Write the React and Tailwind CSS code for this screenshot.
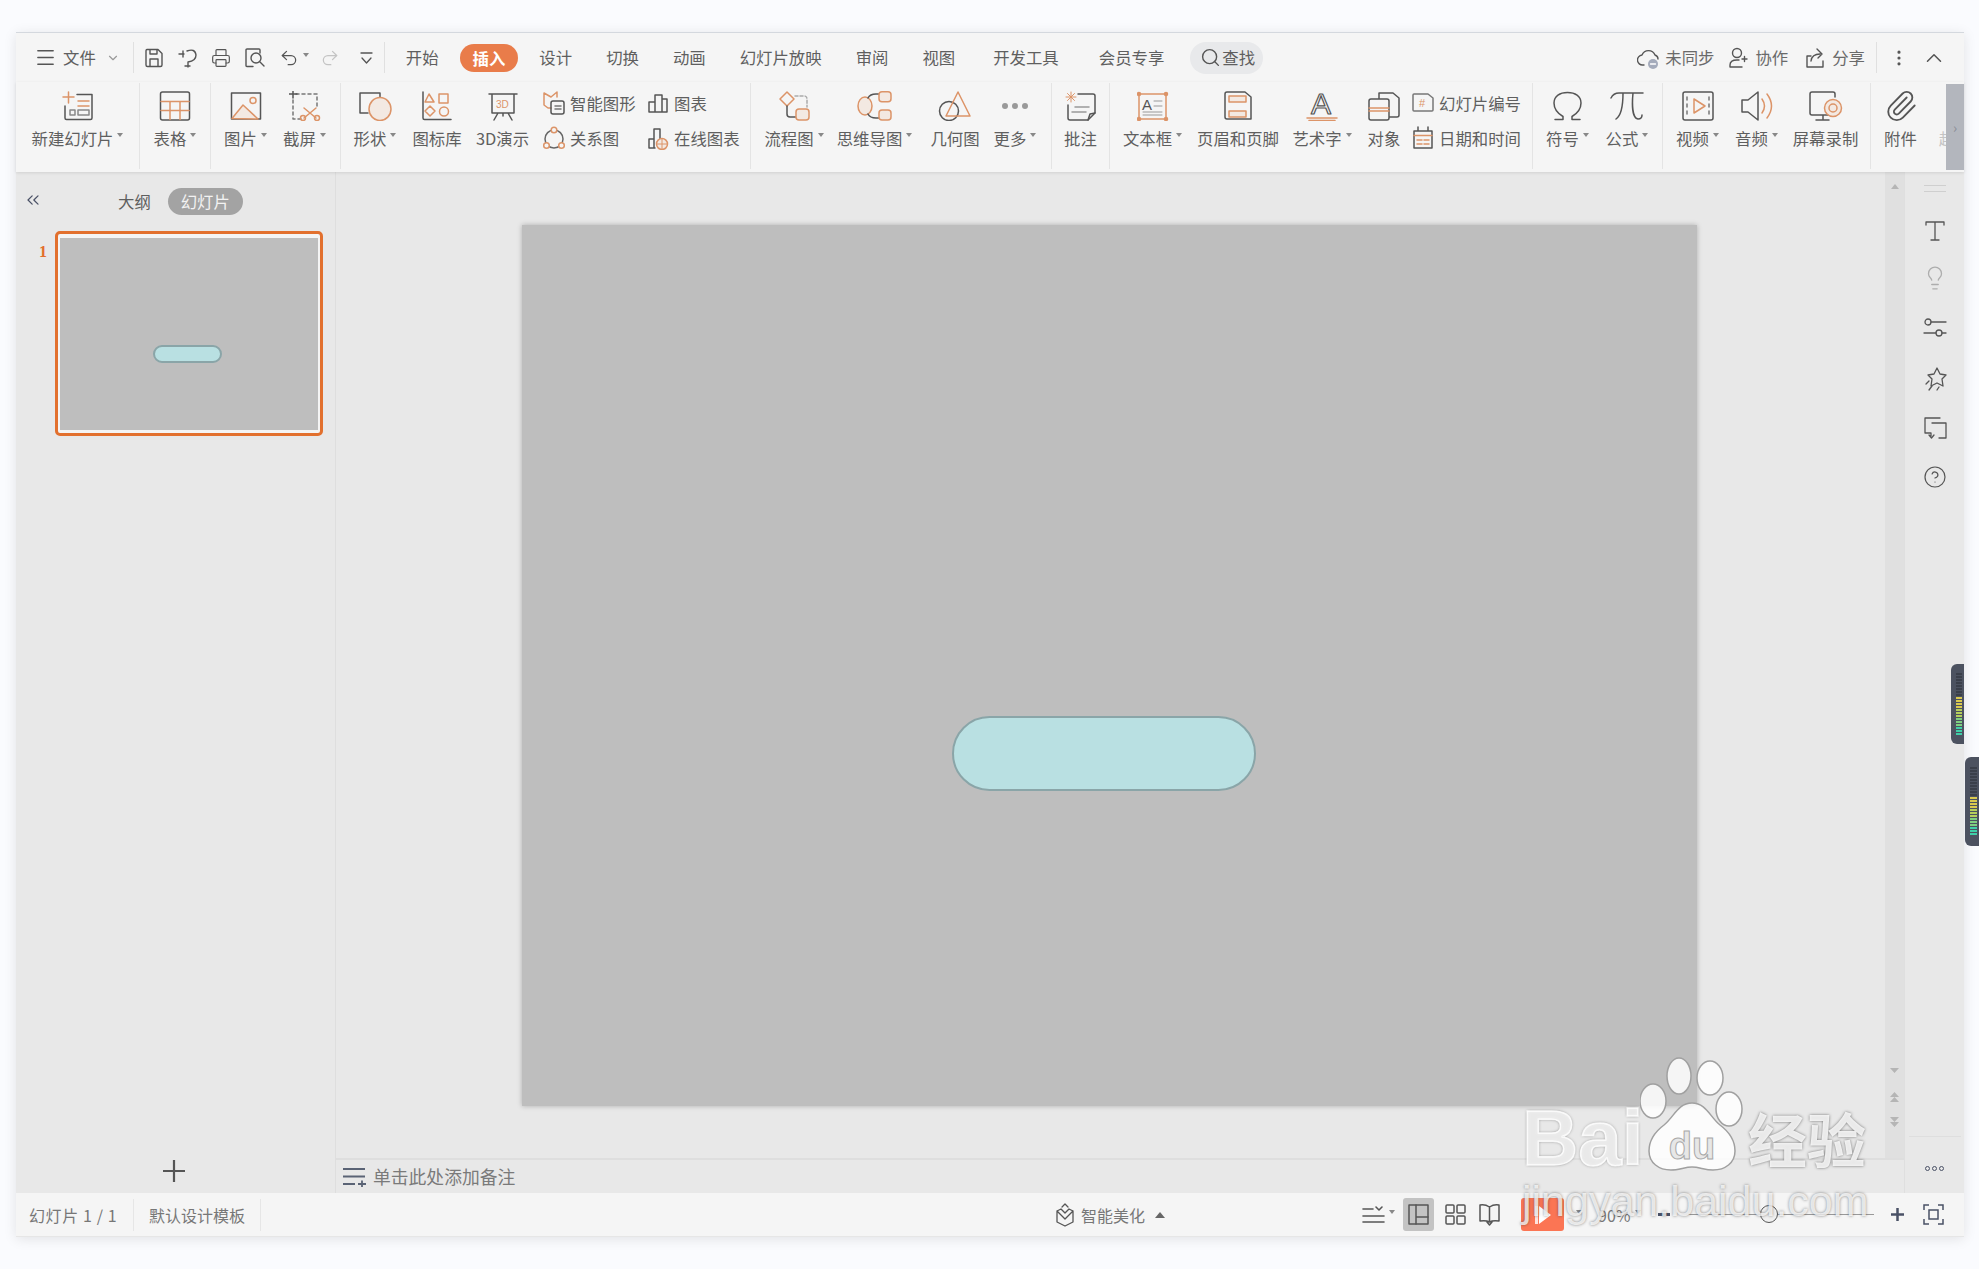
import { ChevronDown, ChevronsLeft, ChevronUp, CircleHelp, EllipsisVertical, Lightbulb, Menu, Paperclip, Printer, Redo2, Search, Undo2 } from "lucide-react";

const G = "#555";
const O = "#dc9468";
const F = "#f3e9e2";

function Svg({ w = 32, h = 30, sw = 1.5, children }) {
  return (
    <svg width={w} height={h} viewBox={`0 0 ${w} ${h}`} fill="none" stroke={G} strokeWidth={sw} strokeLinecap="round" strokeLinejoin="round">
      {children}
    </svg>
  );
}

function Caret() {
  return <span className="inline-block ml-[4px] mb-[6px] border-x-[3px] border-t-[4px] border-x-transparent border-t-[#888]" />;
}

function Big({ className, label, caret, children, muted }) {
  return (
    <div className={`${className} shrink-0 flex flex-col items-center pt-[9px]`}>
      <div className="h-[29px] flex items-center justify-center">{children}</div>
      <div className={`mt-[6px] h-[24px] leading-[24px] flex items-center whitespace-nowrap ${muted ? "text-[#c4c4c4]" : ""}`}>
        {label}
        {caret && <Caret />}
      </div>
    </div>
  );
}

function Small({ icon, label }) {
  return (
    <div className="flex items-center h-[24px] gap-[5px] whitespace-nowrap">
      <div className="w-[22px] flex justify-center">{icon}</div>
      {label}
    </div>
  );
}

function Sep() {
  return <div className="w-px h-[86px] mt-[1px] bg-[#e4e4e4] shrink-0" />;
}

const meterColors = ["#3a3f4a", "#d9c94f", "#b5cf5c", "#7fcf80", "#3fcfa8"];

function Meter({ bars, dark, w, h }) {
  return (
    <svg width={w} height={h} viewBox={`0 0 ${w} ${h}`}>
      {Array.from({ length: bars }).map((_, i) => {
        let color = meterColors[0];
        if (i >= dark) {
          const t = (i - dark) / (bars - dark);
          color = meterColors[1 + Math.min(3, Math.floor(t * 4))];
        }
        return <rect key={i} x="0" y={i * 3} width={w} height="2" fill={color} />;
      })}
    </svg>
  );
}

/* ribbon icons */
const NewSlide = () => (
  <Svg>
    <path d="M1 6h11M6.500 1v11" stroke={O} />
    <path d="M3 15v12q0 1.500 1.500 1.500h24q1.500 0 1.500-1.500V3.500H15" />
    <path d="M16 10h11M16 15h11" stroke={O} />
    <rect x="8" y="19" width="5" height="5" stroke="#888" />
    <rect x="16" y="19" width="11" height="5" stroke="#888" />
  </Svg>
);
const TableIcon = () => (
  <Svg>
    <rect x="1.500" y="1" width="29" height="28" rx="2" />
    <path d="M2 10.500h28M2 19.500h28M11 10.500v18M21 10.500v18" stroke={O} />
  </Svg>
);
const PictureIcon = () => (
  <Svg>
    <rect x="1.500" y="2" width="29" height="26" />
    <path d="M2 27.500 13 14l15 14z" stroke={O} fill={F} />
    <circle cx="23" cy="9.500" r="3" stroke={O} />
  </Svg>
);
const ScreenshotIcon = () => (
  <Svg>
    <path d="M7 3h21v14M4 9v19h10" stroke="#777" strokeDasharray="3 3" />
    <path d="M0 3h8M4-1v8" />
    <path d="m15 17 12 10M27 17 15 27" stroke={O} />
    <circle cx="14" cy="27" r="2.500" stroke={O} />
    <circle cx="28" cy="27" r="2.500" stroke={O} />
  </Svg>
);
const ShapeIcon = () => (
  <Svg w={34}>
    <path d="M10 22H2V2h20v6" />
    <ellipse cx="22" cy="18" rx="11" ry="11.500" stroke={O} fill={F} />
  </Svg>
);
const LibraryIcon = () => (
  <Svg>
    <path d="M2 1v26q0 1.500 1.500 1.500H30" />
    <path d="m8 3 5 8H4zM18 3h9v9h-9zM9 15l5 5-5 5-5-5z" stroke={O} />
    <circle cx="23" cy="20.500" r="4.500" stroke={O} />
  </Svg>
);
const ThreeDIcon = () => (
  <Svg>
    <path d="M2 3h28M5 3v19h22V3M11 22l-4 7M21 22l4 7M16 22v3" />
    <text x="9" y="17" fontSize="10" fill={O} stroke="none" fontFamily="Liberation Sans">3D</text>
  </Svg>
);
const SmartIcon = () => (
  <Svg w={22} h={24}>
    <path d="M1 2v12l4 3h3M1 2l7 4 6-5v5" stroke={O} />
    <rect x="8" y="10" width="13" height="13" rx="2" />
    <path d="M12 15h6M12 18h6" stroke="#777" />
  </Svg>
);
const RelationIcon = () => (
  <Svg w={22} h={24}>
    <circle cx="11" cy="13" r="9" stroke="#666" />
    <circle cx="11" cy="4" r="2.800" stroke={O} fill="#f5f5f5" />
    <circle cx="3.500" cy="19.500" r="2.800" stroke={O} fill="#f5f5f5" />
    <circle cx="18.500" cy="19.500" r="2.800" stroke={O} fill="#f5f5f5" />
  </Svg>
);
const ChartIcon = () => (
  <Svg w={22} h={24}>
    <path d="M2 21V11h6v10M8 21V4h7v17M15 21V8h5v13zM2 21h18" />
  </Svg>
);
const OnlineChartIcon = () => (
  <Svg w={22} h={24}>
    <path d="M2 22V13h5v9M7 22V3h6v10M2 22h6" />
    <circle cx="15" cy="18" r="5.500" stroke={O} fill={F} />
    <path d="M10 18h10M15 12.500v11" stroke={O} strokeWidth="1" />
  </Svg>
);
const FlowIcon = () => (
  <Svg>
    <path d="m9 1 7 7-7 7-7-7z" stroke={O} />
    <path d="M9 15v8q0 3 3 3h6" />
    <path d="M17 5h9q3 0 3 3v8" stroke="#aaa" strokeDasharray="3 2" />
    <rect x="18" y="18" width="13" height="11" rx="3" stroke={O} fill={F} />
  </Svg>
);
const MindIcon = () => (
  <Svg w={36}>
    <ellipse cx="8" cy="15" rx="7" ry="9" stroke={O} fill={F} />
    <path d="M11 7q2-4 8-4h4M11 23q2 4 8 4h4" />
    <rect x="22" y="0.800" width="12" height="10" rx="3" stroke={O} fill={F} />
    <rect x="22" y="19" width="12" height="10" rx="3" stroke={O} fill={F} />
  </Svg>
);
const GeoIcon = () => (
  <Svg w={34}>
    <circle cx="11" cy="20" r="9.500" />
    <path d="M20 1 32 25H8z" stroke={O} />
  </Svg>
);
const DotsIcon = () => (
  <div className="flex gap-[4px]">
    <span className="w-[6px] h-[6px] rounded-full bg-[#999]" />
    <span className="w-[6px] h-[6px] rounded-full bg-[#999]" />
    <span className="w-[6px] h-[6px] rounded-full bg-[#999]" />
  </div>
);
const NoteIcon = () => (
  <Svg>
    <path d="M1 6h10M6 1v10M2.500 2.500l7 7M9.500 2.500l-7 7" stroke={O} strokeWidth="1" />
    <path d="M13 3h15q2 0 2 2v17l-7 7H5q-2 0-2-2V14" />
    <path d="m30 22-5 1-2 6" />
    <path d="M10 16h14M7 21h14" stroke="#999" />
  </Svg>
);
const TextBoxIcon = () => (
  <Svg>
    <rect x="2" y="3" width="27" height="25" stroke={O} />
    <circle cx="2" cy="3" r="1.500" fill={O} stroke={O} />
    <circle cx="29" cy="3" r="1.500" fill={O} stroke={O} />
    <circle cx="2" cy="28" r="1.500" fill={O} stroke={O} />
    <circle cx="29" cy="28" r="1.500" fill={O} stroke={O} />
    <text x="5" y="19" fontSize="15" fill={G} stroke="none" fontFamily="Liberation Sans">A</text>
    <path d="M17 10h8M17 15h8M6 21h19M6 24h19" stroke="#999" strokeWidth="1" />
  </Svg>
);
const HeaderIcon = () => (
  <Svg w={28}>
    <path d="M3 1h18l6 5v22H3q-2 0-2-2V3q0-2 2-2z" />
    <rect x="5" y="5" width="17" height="6" stroke={O} fill={F} />
    <rect x="5" y="20" width="17" height="6" stroke={O} fill={F} />
  </Svg>
);
const ArtIcon = () => (
  <Svg>
    <text x="5" y="23" fontSize="30" fill="none" stroke={G} strokeWidth="1.200" fontFamily="Liberation Sans">A</text>
    <path d="M1 27h30M3 29.500h26" stroke={O} />
  </Svg>
);
const ObjectIcon = () => (
  <Svg>
    <path d="M11 8V2h14l6 5v17q0 2-2 2h-8" />
    <rect x="1" y="8" width="20" height="21" rx="2" fill="#f5f5f5" />
    <path d="M1 17h20M1 20h20" stroke={O} />
  </Svg>
);
const SlideNumIcon = () => (
  <Svg w={22} h={24}>
    <path d="M2 3h14l5 4v12q0 1-1 1H2q-1 0-1-1V4q0-1 1-1z" stroke="#777" />
    <text x="7" y="16" fontSize="11" fill={O} stroke="none" fontFamily="Liberation Sans">#</text>
  </Svg>
);
const DateIcon = () => (
  <Svg w={22} h={24}>
    <path d="M6 1v4M16 1v4M2 5h18v17H2z" />
    <path d="M2 9.500h18M5 14h5M12 14h5M5 18h5M12 18h5" stroke={O} />
  </Svg>
);
const OmegaIcon = () => (
  <Svg>
    <path d="M3 28.500h8v-3C5 22 2 17 2 12 2 5 8 1.500 15.500 1.500S29 5 29 12c0 5-3 10-9 13.500v3h8" />
  </Svg>
);
const PiIcon = () => (
  <Svg w={34}>
    <path d="M1 7C3 3 6 2 9 2h24M13 2c0 12-1 22-7 26M23 2c-1 10-1 25 5 26 3 0 4-2 4-4" />
  </Svg>
);
const VideoIcon = () => (
  <Svg>
    <rect x="1" y="1" width="30" height="28" rx="2" />
    <path d="M12 8v14l11-7z" stroke={O} />
    <path d="M5 6v3M5 13v3M5 20v3M27 6v3M27 13v3M27 20v3" stroke="#777" />
  </Svg>
);
const AudioIcon = () => (
  <Svg w={34}>
    <path d="M2 9v12h6l10 8V1L8 9z" />
    <path d="M22 8q5 7 0 14M27 3q9 12 0 24" stroke={O} />
  </Svg>
);
const RecordIcon = () => (
  <Svg w={34}>
    <path d="M22 24H3q-2 0-2-2V3q0-2 2-2h21q2 0 2 2v3M14 24v4M7 29h13" />
    <circle cx="24" cy="17" r="8.500" stroke={O} fill={F} />
    <circle cx="24" cy="17" r="4" stroke={O} />
  </Svg>
);

function App() {
  return (
    <div className="relative w-[1979px] h-[1269px] overflow-hidden bg-[#fafbfe] pt-[32px] pl-[16px] text-[16.400px] text-[#5f5f5f] font-['Noto_Sans_CJK_SC','Liberation_Sans',sans-serif]">
      <div className="w-[1948px] h-[1205px] flex flex-col bg-[#f5f5f5] border-t border-[#d4d8de] shadow-[0_2px_12px_rgba(0,0,0,0.1)]">
        {/* tabs */}
        <div className="h-[49px] flex items-center pl-[18px] pr-[17px] shrink-0">
          <Menu size={23} strokeWidth={1.500} color={G} />
          <span className="ml-[6px]">文件</span>
          <ChevronDown size={14} className="ml-[10px]" color="#999" />
          <div className="ml-[13px] w-px h-[31px] bg-[#e0e0e0]" />
          <div className="ml-[10px] flex items-center">
            <Svg w={20} h={20} sw={1.400}>
              <path d="M3 1.500h11l4 4V17q0 1.500-1.500 1.500h-13Q2 18.500 2 17V3q0-1.500 1-1.500zM6 18.500V11h8v7.500M6 2v4h7V2" />
            </Svg>
            <div className="ml-[14px]">
              <Svg w={20} h={20} sw={1.400}>
                <path d="M1 6h5M9 3q8-3 9 4 0 6-8 7v5M7 18h5M5 3v6" />
              </Svg>
            </div>
            <Printer size={20} strokeWidth={1.400} color={G} className="ml-[13px]" />
            <div className="ml-[13px]">
              <Svg w={21} h={20} sw={1.400}>
                <path d="M9 18.500H3q-1 0-1-1V2q0-1 1-1h12q1 0 1 1v3" />
                <circle cx="12" cy="10" r="5" />
                <path d="m16 14 4 4" />
              </Svg>
            </div>
            <Undo2 size={20} strokeWidth={1.500} color={G} className="ml-[14px]" />
            <Caret />
            <Redo2 size={20} strokeWidth={1.500} color="#c4c4c4" className="ml-[11px]" />
            <div className="ml-[20px]">
              <Svg w={13} h={14} sw={1.300}>
                <path d="M1 2h11M2 7l4.500 5L11 7" />
              </Svg>
            </div>
          </div>
          <div className="ml-[11px] w-px h-[31px] bg-[#e0e0e0]" />
          <div className="ml-[21px] flex items-center gap-[34px] whitespace-nowrap">
            <span>开始</span>
            <span className="bg-[#e97c4a] text-white font-bold rounded-full px-[13px] -mx-[13px] h-[28px] leading-[28px]">插入</span>
            <span>设计</span>
            <span>切换</span>
            <span>动画</span>
            <span>幻灯片放映</span>
            <span>审阅</span>
            <span>视图</span>
            <span className="ml-[4px]">开发工具</span>
            <span className="ml-[6px]">会员专享</span>
          </div>
          <div className="ml-[26px] w-[73px] h-[32px] rounded-full bg-[#e8e9eb] flex items-center pl-[10px]">
            <Search size={21} strokeWidth={1.600} color={G} />
            <span className="ml-[1px]">查找</span>
          </div>
          <div className="ml-auto flex items-center">
            <Svg w={23} h={24} sw={1.400}>
              <path d="M7 19H6a5 5 0 0 1-1-10 7 7 0 0 1 13 0q3 1 3 4" />
              <circle cx="16" cy="18" r="5" fill="#a4abbb" stroke="none" />
              <path d="M13.500 18h5" stroke="#fff" />
            </Svg>
            <span className="ml-[5px] text-[#6a6a6a]">未同步</span>
            <div className="ml-[14px]">
              <Svg w={20} h={22} sw={1.400}>
                <circle cx="9" cy="6" r="4.500" />
                <path d="M2 20v-2q0-5 7-5h2M2 20h12M14 12h5M16.500 9.500v5" />
              </Svg>
            </div>
            <span className="ml-[7px] text-[#6a6a6a]">协作</span>
            <div className="ml-[17px]">
              <Svg w={20} h={22} sw={1.400}>
                <path d="M6 9H2v11h16v-6M6 14q1-7 9-7M12 2l5 5-4 4" />
              </Svg>
            </div>
            <span className="ml-[7px] text-[#6a6a6a]">分享</span>
            <div className="ml-[11px] w-px h-[31px] bg-[#e0e0e0]" />
            <EllipsisVertical size={20} strokeWidth={1.800} color={G} className="ml-[12px]" />
            <ChevronUp size={26} strokeWidth={1.400} color={G} className="ml-[12px]" />
          </div>
        </div>

        {/* ribbon */}
        <div className="relative h-[90px] shrink-0 flex overflow-hidden shadow-[0_1px_3px_rgba(0,0,0,0.1)]">
          <Big className="w-[123px]" label="新建幻灯片" caret><NewSlide /></Big>
          <Sep />
          <Big className="w-[70px]" label="表格" caret><TableIcon /></Big>
          <Sep />
          <div className="w-[129px] shrink-0 flex pl-[5px]">
            <Big className="w-[59px]" label="图片" caret><PictureIcon /></Big>
            <Big className="w-[59px]" label="截屏" caret><ScreenshotIcon /></Big>
          </div>
          <Sep />
          <div className="w-[409px] shrink-0 flex pl-[3px]">
            <Big className="w-[62px]" label="形状" caret><ShapeIcon /></Big>
            <Big className="w-[62px]" label="图标库"><LibraryIcon /></Big>
            <Big className="w-[69px]" label="3D演示"><ThreeDIcon /></Big>
            <div className="w-[104px] ml-[6px] pt-[9px] flex flex-col gap-[11px]">
              <Small icon={<SmartIcon />} label="智能图形" />
              <Small icon={<RelationIcon />} label="关系图" />
            </div>
            <div className="pt-[9px] flex flex-col gap-[11px]">
              <Small icon={<ChartIcon />} label="图表" />
              <Small icon={<OnlineChartIcon />} label="在线图表" />
            </div>
          </div>
          <Sep />
          <div className="w-[300px] shrink-0 flex pl-[8px]">
            <Big className="w-[70px]" label="流程图" caret><FlowIcon /></Big>
            <Big className="w-[91px]" label="思维导图" caret><MindIcon /></Big>
            <Big className="w-[70px]" label="几何图"><GeoIcon /></Big>
            <Big className="w-[50px]" label="更多" caret><DotsIcon /></Big>
          </div>
          <Sep />
          <Big className="w-[57px]" label="批注"><NoteIcon /></Big>
          <Sep />
          <div className="w-[422px] shrink-0 flex pl-[4px]">
            <Big className="w-[77px]" label="文本框" caret><TextBoxIcon /></Big>
            <Big className="w-[94px]" label="页眉和页脚"><HeaderIcon /></Big>
            <Big className="w-[74px]" label="艺术字" caret><ArtIcon /></Big>
            <Big className="w-[50px]" label="对象"><ObjectIcon /></Big>
            <div className="ml-[3px] pt-[9px] flex flex-col gap-[11px]">
              <Small icon={<SlideNumIcon />} label="幻灯片编号" />
              <Small icon={<DateIcon />} label="日期和时间" />
            </div>
          </div>
          <Sep />
          <div className="w-[129px] shrink-0 flex pl-[5px]">
            <Big className="w-[59px]" label="符号" caret><OmegaIcon /></Big>
            <Big className="w-[60px]" label="公式" caret><PiIcon /></Big>
          </div>
          <Sep />
          <div className="w-[207px] shrink-0 flex pl-[5px]">
            <Big className="w-[59px]" label="视频" caret><VideoIcon /></Big>
            <Big className="w-[59px]" label="音频" caret><AudioIcon /></Big>
            <Big className="w-[79px]" label="屏幕录制"><RecordIcon /></Big>
          </div>
          <Sep />
          <Big className="w-[59px]" label="附件"><Paperclip size={34} strokeWidth={1.300} color={G} /></Big>
          <Big className="w-[34px]" label="超" muted><div className="w-[4px] h-[20px]" /></Big>
          <div className="absolute right-0 top-[2px] w-[18px] h-[86px] bg-[#b3b6bd] flex items-center justify-center text-[#8a8d95] text-[14px]">›</div>
        </div>

        {/* body */}
        <div className="h-[1021px] shrink-0 flex bg-[#e8e8e8]">
          <div className="w-[320px] shrink-0 flex flex-col border-r border-[#dedede]">
            <div className="h-[59px] shrink-0 flex items-center">
              <ChevronsLeft size={20} strokeWidth={1.500} color="#4a5166" className="ml-[7px] mb-[4px]" />
              <span className="ml-[75px]">大纲</span>
              <span className="ml-[17px] w-[75px] h-[27px] rounded-full bg-[#a3a3a3] text-[#f2f2f2] flex items-center justify-center">幻灯片</span>
            </div>
            <div className="flex items-start pl-[23px]">
              <span className="w-[16px] mt-[9px] text-[#e26f2b] text-[16px] font-bold font-['Liberation_Serif',serif]">1</span>
              <div className="w-[268px] h-[205px] rounded-[5px] border-[3px] border-[#e2702e] bg-[#f4f4f4] flex items-center justify-center">
                <div className="relative w-[258px] h-[192px] bg-[#bebebe]">
                  <div className="absolute left-[93px] top-[107px] w-[69px] h-[18px] rounded-full bg-[#b9e0e2] border-2 border-[#8aa5a8]" />
                </div>
              </div>
            </div>
            <div className="mt-auto h-[44px] flex items-center justify-center pr-[3px] text-[#555]">
              <svg width="24" height="24" viewBox="0 0 24 24" stroke="#555" strokeWidth="2.200"><path d="M1 12h22M12 1v22" /></svg>
            </div>
          </div>

          <div className="flex-1 flex flex-col">
            <div className="h-[986px] flex">
              <div className="flex-1 flex justify-center pt-[53px] pr-[2px]">
                <div className="relative w-[1175px] h-[881px] bg-[#bebebe] shadow-[0_0_5px_rgba(0,0,0,0.25)]">
                  <div className="absolute left-[430px] top-[491px] w-[304px] h-[75px] rounded-full bg-[#b9e0e2] border-2 border-[#8aa5a8]" />
                </div>
              </div>
              <div className="w-[19px] bg-[#e0e0e0] flex flex-col items-center pt-[12px] pb-[30px]">
                <span className="border-x-[4px] border-b-[5px] border-x-transparent border-b-[#b5b5b5]" />
                <svg className="mt-auto" width="9" height="60" viewBox="0 0 9 60" fill="#b5b5b5">
                  <path d="M0 0h9L4.500 5zM0 29l4.500-5 4.500 5zM0 34l4.500-5 4.500 5zM0 49h9l-4.500 5zM0 54h9l-4.500 5z" />
                </svg>
              </div>
            </div>
            <div className="h-[35px] border-t-2 border-[#dedede] flex items-center pl-[7px]">
              <svg width="23" height="20" viewBox="0 0 23 20" stroke="#5a6375" strokeWidth="1.800"><path d="M0 2h22M0 9.500h22M0 17h12M15 17h8M19 13.500v6.500" /></svg>
              <span className="ml-[7px] text-[17.800px] text-[#7a7a7a]">单击此处添加备注</span>
            </div>
          </div>

          <div className="w-[60px] shrink-0 border-l border-[#dfdfdf] flex flex-col items-center pt-[13px]">
            <div className="w-[22px] h-[7px] border-y border-[#cfcfcf]" />
            <div className="mt-[29px] flex flex-col items-center gap-[24px]">
              <Svg w={20} h={20} sw={1.300}>
                <path d="M1 4V1h18v3M10 1v18M6 19h8" />
              </Svg>
              <Lightbulb size={26} strokeWidth={1.200} color="#adadad" />
              <Svg w={24} h={26} sw={1.300}>
                <circle cx="5" cy="7" r="3" />
                <path d="M8 7h15M1 18h12" />
                <circle cx="16" cy="18" r="3" />
                <path d="M19 18h4" />
              </Svg>
              <Svg w={24} h={26} sw={1.300}>
                <path d="m14 3 3 6 6 1-4 4 1 7-6-3-6 3 1-7-4-4 6-1zM6 16l-3 3M9 21l-3 4M16 22l-2 3" />
              </Svg>
              <Svg w={24} h={26} sw={1.300}>
                <path d="M17 3H2v15h6M9 8h14v15h-7M8 18v3M6 20l2.500 3 2.500-3" />
              </Svg>
              <CircleHelp size={24} strokeWidth={1.200} color={G} />
            </div>
            <div className="mt-auto mb-[22px] w-[52px] border-t border-[#dedede] pt-[29px] flex justify-center gap-[2px]">
              <span className="w-[5px] h-[5px] rounded-full border border-[#4a5166]" />
              <span className="w-[5px] h-[5px] rounded-full border border-[#4a5166]" />
              <span className="w-[5px] h-[5px] rounded-full border border-[#4a5166]" />
            </div>
          </div>
        </div>

        {/* status bar */}
        <div className="h-[44px] shrink-0 flex items-center text-[#777] text-[16px] border-b border-[#e6e6e6]">
          <div className="h-[32px] w-[118px] border-r border-[#e6e6e6] pl-[13px] flex items-center tracking-[0.600px]">幻灯片 1 / 1</div>
          <div className="h-[32px] w-[127px] border-r border-[#e6e6e6] pl-[15px] flex items-center">默认设计模板</div>
          <div className="ml-[794px] flex items-center">
            <Svg w={20} h={24} sw={1.300}>
              <path d="M7 4l3-3 3 3M2 8v11l8 4 8-4V8l-4-2-4 4-4-4zM2 8l8 8 8-8" />
            </Svg>
            <span className="ml-[6px]">智能美化</span>
            <span className="ml-[10px] border-x-[5px] border-b-[6px] border-x-transparent border-b-[#666]" />
          </div>
          <div className="ml-[197px] flex items-center">
            <Svg w={23} h={22} sw={1.600}>
              <path d="M1 5h10M1 12h21M1 18h21M14 3l3 3 3-3" />
            </Svg>
            <Caret />
          </div>
          <div className="ml-[8px] w-[31px] h-[33px] rounded-[3px] bg-[#c3c3c3] flex items-center justify-center">
            <Svg w={21} h={21} sw={1.500}>
              <rect x="1" y="1" width="19" height="19" />
              <path d="M8 1v19M8 13h12" />
            </Svg>
          </div>
          <div className="ml-[11px]">
            <Svg w={21} h={21} sw={1.500}>
              <rect x="1" y="1" width="8" height="8" rx="1" />
              <rect x="12" y="1" width="8" height="8" rx="1" />
              <rect x="1" y="12" width="8" height="8" rx="1" />
              <rect x="12" y="12" width="8" height="8" rx="1" />
            </Svg>
          </div>
          <div className="ml-[13px]">
            <Svg w={21} h={23} sw={1.500}>
              <path d="M10.500 4 Q6 1 1 2v16q6-1 9.500 1 3.500-2 9.500-1V2q-5-1-9.500 2zM10.500 4v15M8 19l2.500 3 2.500-3" />
            </Svg>
          </div>
          <div className="ml-[21px] w-[43px] h-[33px] rounded-[3px] bg-[#fb7554] flex items-center justify-center gap-[1px]">
            <span className="w-[3px] h-[18px] bg-white/80" />
            <span className="border-y-[9px] border-l-[12px] border-y-transparent border-l-white" />
          </div>
          <span className="ml-[8px] flex"><Caret /></span>
          <span className="ml-[16px]">90%</span>
          <Caret />
          <div className="ml-[17px] w-[12px] h-[3px] bg-[#4a5166]" />
          <div className="relative ml-[18px] w-[186px] h-px bg-[#999]">
            <span className="absolute left-[72px] -top-[9px] w-[18px] h-[18px] rounded-full border border-[#555] bg-[#f0f0f0]" />
          </div>
          <svg className="ml-[17px]" width="13" height="13" viewBox="0 0 13 13" stroke="#4a5166" strokeWidth="2.500"><path d="M0 6.500h13M6.500 0v13" /></svg>
          <svg className="ml-[19px]" width="21" height="21" viewBox="0 0 21 21" fill="none" stroke="#4a5166" strokeWidth="1.500">
            <path d="M1 6V1h5M15 1h5v5M20 15v5h-5M6 20H1v-5" />
            <rect x="6" y="6" width="9" height="9" />
          </svg>
        </div>
      </div>

      {/* desktop widgets */}
      <div className="absolute left-[1951px] top-[664px] w-[13px] h-[80px] rounded-l-[6px] bg-[#4c5260] pl-[5px] pt-[9px]">
        <Meter bars={21} dark={8} w={6} h={63} />
      </div>
      <div className="absolute left-[1965px] top-[757px] w-[14px] h-[89px] rounded-l-[6px] bg-[#4c5260] pl-[5px] pt-[10px]">
        <Meter bars={23} dark={10} w={7} h={69} />
      </div>

      {/* watermark */}
      <div className="absolute left-[1522px] top-[1102px] text-[78px] leading-[72px] font-bold font-['Liberation_Sans',sans-serif] text-white/85 [-webkit-text-stroke:1.500px_rgba(255,255,255,0.85)] [text-shadow:0_0_3px_rgba(60,60,60,0.7)]">Bai</div>
      <svg className="absolute left-[1640px] top-[1055px]" width="105" height="120" viewBox="0 0 105 120" fill="#ffffff" fillOpacity="0.85" stroke="#a0a0a0" strokeWidth="1.500">
        <ellipse cx="13" cy="46" rx="13" ry="17" />
        <ellipse cx="39" cy="21" rx="12" ry="18" />
        <ellipse cx="70" cy="23" rx="13" ry="17" />
        <ellipse cx="89" cy="54" rx="13" ry="17" />
        <path d="M52 48c-14 0-18 14-28 22-8 6-15 14-15 26 0 12 10 19 22 19 8 0 14-3 21-3s13 3 21 3c12 0 22-7 22-19 0-12-7-20-15-26-10-8-14-22-28-22z" />
        <text x="52" y="104" textAnchor="middle" fontSize="38" fontWeight="700" fontFamily="Liberation Sans" fill="#e4e4e4" stroke="#a8a8a8" strokeWidth="1">du</text>
      </svg>
      <div className="absolute left-[1748px] top-[1100px] text-[59px] leading-[76px] font-bold text-white/85 [text-shadow:0_0_3px_rgba(60,60,60,0.7)]">经验</div>
      <div className="absolute left-[1522px] top-[1176px] text-[43px] leading-[50px] font-['Liberation_Sans',sans-serif] text-white/75 [text-shadow:0_0_3px_rgba(60,60,60,0.6)]">jingyan.baidu.com</div>
    </div>
  );
}

export default App;
